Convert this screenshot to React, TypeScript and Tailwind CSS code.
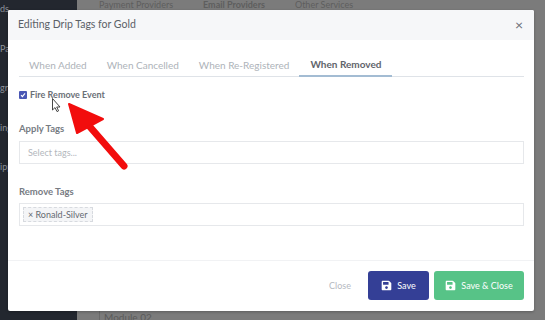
import { FaSave } from "react-icons/fa";

const tabs = ["When Added", "When Cancelled", "When Re-Registered", "When Removed"];

const Arrow = () => (
  <svg className="absolute left-0 top-0 pointer-events-none" width="545" height="320" viewBox="0 0 545 320">
    {/* red arrow */}
    <line x1="124" y1="166" x2="84" y2="120" stroke="#f20d0d" strokeWidth="7" strokeLinecap="round" />
    <polygon points="69,104 103,119 77,133" fill="#f20d0d" stroke="#f20d0d" strokeWidth="2" strokeLinejoin="round" />
    {/* mouse cursor */}
    <path
      d="M52.5 98.5 L52.5 110 L55 107.6 L57 111.6 L58.6 110.8 L56.7 107 L60 107 Z"
      fill="#fff"
      stroke="#333"
      strokeWidth="0.9"
      strokeLinejoin="round"
    />
  </svg>
);

export default function App() {
  return (
    <div className="relative w-[545px] h-[320px] overflow-hidden bg-[#7b7b7b] font-['Lato',sans-serif]">
      {/* page behind the modal */}
      <div className="flex h-full">
        <div className="w-[77px] bg-[#23272f] flex flex-col gap-[26px] pt-[2px] text-[9px] text-[#8d929a]">
          <span>ds</span>
          <span>Pa</span>
          <span>gra</span>
          <span>ing</span>
          <span>ipp</span>
        </div>
        <div className="flex-1 flex flex-col">
          <div className="flex gap-[30px] pl-[22px] text-[9px] text-[#5e5e5e] -mt-[2px]">
            <span>Payment Providers</span>
            <span className="font-bold">Email Providers</span>
            <span>Other Services</span>
          </div>
          <div className="mt-auto ml-[22px] h-[14px] border-l border-[#6a6a6a] pl-[4px] text-[10px] text-[#5a5a5a] leading-[22px]">
            Module 02
          </div>
        </div>
      </div>

      {/* modal */}
      <div className="absolute left-[8px] top-[10px] w-[526px] h-[301px] bg-white rounded-[2px] flex flex-col shadow-[0_1px_3px_rgba(0,0,0,0.25)]">
        <div className="h-[30px] bg-[#f6f7f9] rounded-t-[2px] flex items-center justify-between pl-[10px] pr-[11px]">
          <span className="text-[10.5px] text-[#5b6067]">Editing Drip Tags for Gold</span>
          <span className="text-[14px] leading-none text-[#6a6f76]">×</span>
        </div>

        <div className="px-[11px] pr-[10px] flex flex-col">
          <div className="mt-[13px] flex border-b border-[#dfe3e8]">
            {tabs.map((t, i) => {
              const active = i === tabs.length - 1;
              return (
                <div
                  key={t}
                  className={
                    active
                      ? "px-[11px] h-[24px] flex items-center text-[10px] font-bold text-[#5f646b] border-b-2 border-[#a3bcd3] -mb-px"
                      : "px-[10px] h-[24px] flex items-center text-[10px] text-[#aeb3b9] -mb-px"
                  }
                >
                  {t}
                </div>
              );
            })}
          </div>

          <label className="mt-[13px] flex items-center gap-[3px] h-[10px]">
            <span className="w-[8px] h-[8px] rounded-[1px] bg-[#4a57b5] flex items-center justify-center">
              <svg width="6" height="6" viewBox="0 0 6 6">
                <path d="M1 3.2 L2.4 4.6 L5 1.4" fill="none" stroke="#fff" strokeWidth="1.1" />
              </svg>
            </span>
            <span className="text-[9px] font-bold text-[#6b7077]">Fire Remove Event</span>
          </label>

          <div className="mt-[22px] text-[9.5px] font-bold text-[#777c83] leading-[14px]">Apply Tags</div>
          <div className="mt-[5px] h-[23px] border border-[#e6e8eb] flex items-center pl-[8px] text-[9px] text-[#b3b7bd]">
            Select tags...
          </div>

          <div className="mt-[21px] text-[9.5px] font-bold text-[#777c83] leading-[14px]">Remove Tags</div>
          <div className="mt-[4px] h-[23px] border border-[#e6e8eb] flex items-center pl-[3px]">
            <span className="h-[15px] px-[4px] flex items-center border border-dashed border-[#d7dadf] bg-[#f4f5f7] text-[9px] text-[#656a71]">
              × Ronald-Silver
            </span>
          </div>
        </div>

        <div className="mt-auto border-t border-[#f1f2f4] h-[51px] flex items-center justify-end pr-[10px] pb-[1px]">
          <span className="text-[9px] text-[#b5b9bf] mr-[17px]">Close</span>
          <button className="w-[61px] h-[29px] rounded-[3px] bg-[#343f96] text-white text-[9px] flex items-center justify-center gap-[5px]">
            <FaSave className="w-[11px] h-[11px]" />
            Save
          </button>
          <button className="ml-[5px] w-[90px] h-[29px] rounded-[3px] bg-[#57c387] text-white text-[9px] flex items-center justify-center gap-[5px]">
            <FaSave className="w-[11px] h-[11px]" />
            Save &amp; Close
          </button>
        </div>
      </div>

      <Arrow />
    </div>
  );
}
